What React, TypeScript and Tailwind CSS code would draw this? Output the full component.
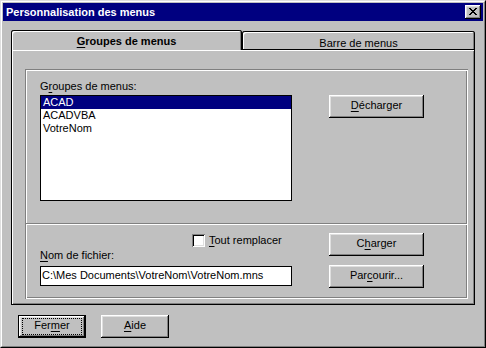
import React from "react";

const raised =
  "shadow-[inset_-1px_-1px_0_#000,inset_1px_1px_0_#fff,inset_-2px_-2px_0_#808080,inset_2px_2px_0_#dfdfdf]";

function Btn({
  children,
  className = "",
  isDefault = false,
}: {
  children: React.ReactNode;
  className?: string;
  isDefault?: boolean;
}) {
  if (isDefault) {
    return (
      <div className={`border border-black bg-[#c0c0c0] ${className}`}>
        <div className={`relative w-full h-full flex items-center justify-center pb-[2px] ${raised}`}>
          <div className="absolute inset-x-[3px] inset-y-[2px] border border-dotted border-black" />
          {children}
        </div>
      </div>
    );
  }
  return (
    <div className={`flex items-center justify-center pb-[2px] bg-[#c0c0c0] ${raised} ${className}`}>
      {children}
    </div>
  );
}

const U = ({ children }: { children: React.ReactNode }) => (
  <span className="underline decoration-1 underline-offset-[2px]">{children}</span>
);

export default function App() {
  const items = ["ACAD", "ACADVBA", "VotreNom"];

  return (
    <div className="w-[486px] h-[348px] bg-[#c0c0c0] text-[11px] leading-[13px] text-black font-['Liberation_Sans',Arial,sans-serif] border border-t-[#dfdfdf] border-l-[#dfdfdf] border-r-black border-b-black">
      <div className="h-full flex flex-col p-px border border-t-white border-l-white border-r-[#808080] border-b-[#808080]">
        {/* title bar */}
        <div className="h-[18px] bg-[#000080] flex items-center justify-between pl-[3px] pr-[2px]">
          <span className="text-white font-bold leading-[18px]">Personnalisation des menus</span>
          <div className={`w-[16px] h-[14px] bg-[#c0c0c0] flex items-center justify-center pb-px ${raised}`}>
            <svg width="8" height="7" viewBox="0 0 8 7" shapeRendering="crispEdges">
              <path
                fill="#000"
                d="M0 0h2v1H0zM6 0h2v1H6zM1 1h2v1H1zM5 1h2v1H5zM2 2h4v1H2zM3 3h2v1H3zM2 4h4v1H2zM1 5h2v1H1zM5 5h2v1H5zM0 6h2v1H0zM6 6h2v1H6z"
              />
            </svg>
          </div>
        </div>

        <div className="pl-[8px] pt-[9px]">
          <div className="w-[464px]">
            {/* tabs */}
            <div className="flex items-end h-[19px]">
              <div className="relative z-10 -mb-px w-[231px] h-[20px] rounded-t-[3px] bg-[#c0c0c0] shadow-[inset_1px_0_0_#000,inset_0_1px_0_#000,inset_-1px_0_0_#000,inset_2px_2px_0_#fff,inset_-2px_0_0_#808080] flex justify-center pt-[5px]">
                <span className="font-bold">
                  <U>G</U>roupes de menus
                </span>
              </div>
              <div className="w-[233px] h-[18px] rounded-t-[3px] bg-[#c0c0c0] shadow-[inset_1px_0_0_#000,inset_0_1px_0_#000,inset_-1px_0_0_#000,inset_2px_2px_0_#fff,inset_-2px_0_0_#808080] flex justify-center pt-[6px]">
                <span>
                  <U>B</U>arre de menus
                </span>
              </div>
            </div>

            {/* panel */}
            <div className="h-[256px] pl-[14px] pt-[20px] pr-[7px] pb-[6px] shadow-[inset_1px_1px_0_#000,inset_-1px_-1px_0_#000,inset_2px_2px_0_#fff,inset_-2px_-2px_0_#808080]">
              <div className="h-[230px] flex flex-col shadow-[inset_1px_1px_0_#808080,inset_-1px_-1px_0_#fff,inset_2px_2px_0_#fff,inset_-2px_-2px_0_#808080]">
                {/* upper part */}
                <div className="h-[154px] flex pl-[15px] pt-[11px]">
                  <div className="w-[252px] flex flex-col">
                    <div className="h-[13px] mb-[2px]">
                      G<U>r</U>oupes de menus:
                    </div>
                    <div className="h-[106px] bg-white border border-black pt-0">
                      {items.map((it, i) => (
                        <div
                          key={it}
                          className={`h-[13px] pl-[2px] ${i === 0 ? "bg-[#000080] text-white" : ""}`}
                        >
                          {it}
                        </div>
                      ))}
                    </div>
                  </div>
                  <div className="ml-[37px] pt-[15px]">
                    <Btn className="w-[95px] h-[23px]">
                      <span>
                        <U>D</U>écharger
                      </span>
                    </Btn>
                  </div>
                </div>

                {/* separator */}
                <div className="mx-px h-px bg-[#808080]" />
                <div className="mx-px h-px bg-white" />

                {/* lower part */}
                <div className="flex pl-[15px]">
                  <div className="w-[252px] flex flex-col">
                    <div className="mt-[9px] h-[13px] flex items-center pl-[152px]">
                      <div className="w-[13px] h-[13px] bg-white shadow-[inset_1px_1px_0_#808080,inset_-1px_-1px_0_#fff,inset_2px_2px_0_#000,inset_-2px_-2px_0_#dfdfdf]" />
                      <span className="ml-[4px]">
                        <U>T</U>out remplacer
                      </span>
                    </div>
                    <div className="mt-[2px] h-[13px]">
                      <U>N</U>om de fichier:
                    </div>
                    <div className="mt-[4px] h-[20px] bg-white border border-black flex items-center pl-[1px] pb-px">
                      C:\Mes Documents\VotreNom\VotreNom.mns
                    </div>
                  </div>
                  <div className="ml-[37px] flex flex-col">
                    <Btn className="mt-[8px] w-[95px] h-[23px]">
                      <span>
                        C<U>h</U>arger
                      </span>
                    </Btn>
                    <Btn className="mt-[9px] w-[95px] h-[23px]">
                      <span>
                        Par<U>c</U>ourir...
                      </span>
                    </Btn>
                  </div>
                </div>
              </div>
            </div>
          </div>

          {/* bottom buttons */}
          <div className="flex mt-[10px] pl-[7px] gap-[15px]">
            <Btn isDefault className="w-[68px] h-[23px]">
              <span>
                Fer<U>m</U>er
              </span>
            </Btn>
            <Btn className="w-[68px] h-[23px]">
              <span>
                <U>A</U>ide
              </span>
            </Btn>
          </div>
        </div>
      </div>
    </div>
  );
}
